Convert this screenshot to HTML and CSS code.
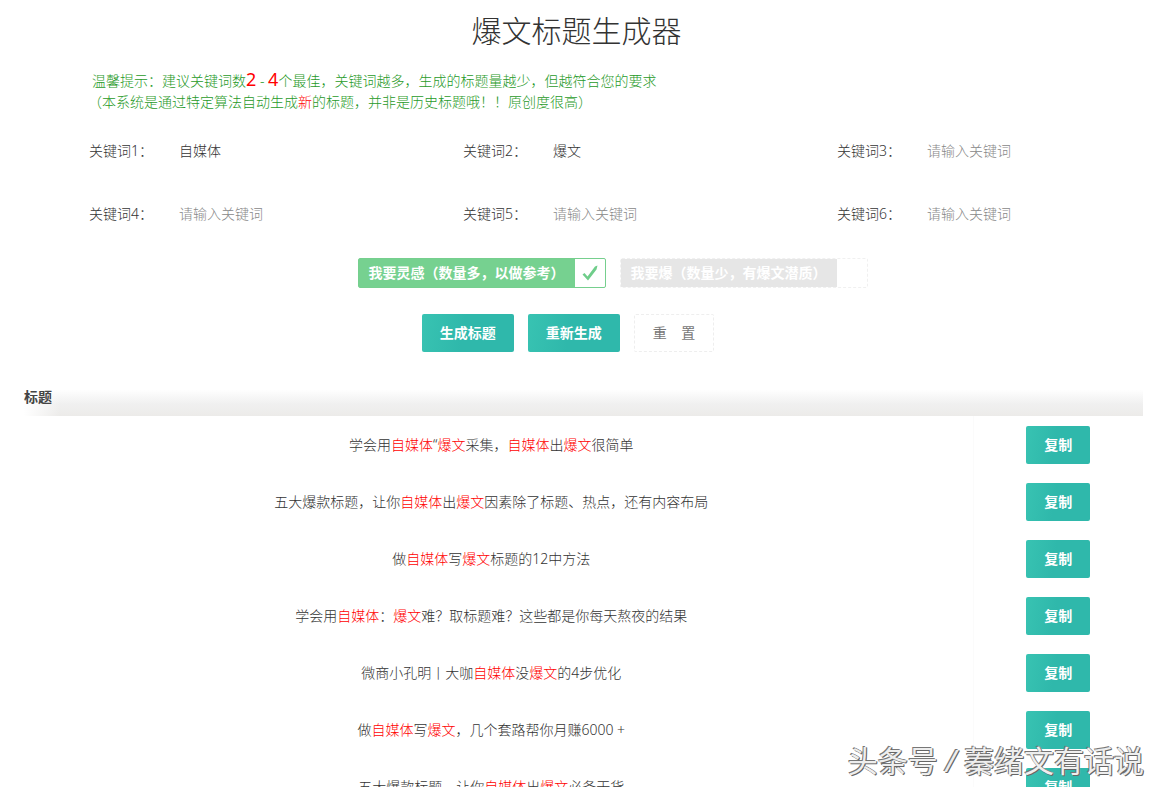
FILE: index.html
```html
<!DOCTYPE html>
<html lang="zh-CN">
<head>
<meta charset="utf-8">
<title>爆文标题生成器</title>
<link rel="stylesheet" href="styles.css">
</head>
<body>
<main class="page">
  <h1 class="title">爆文标题生成器</h1>
  <div class="tips">
    <p class="tip tip-first">温馨提示：建议关键词数<b class="num">2</b> - <b class="num">4</b>个最佳，关键词越多，生成的标题量越少，但越符合您的要求</p>
    <p class="tip">（本系统是通过特定算法自动生成<em>新</em>的标题，并非是历史标题哦！！原创度很高）</p>
  </div>
  <form class="form">
    <div class="fields">
      <div class="field"><label for="k1">关键词1：</label><input id="k1" type="text" value="自媒体" placeholder="请输入关键词"></div>
      <div class="field"><label for="k2">关键词2：</label><input id="k2" type="text" value="爆文" placeholder="请输入关键词"></div>
      <div class="field"><label for="k3">关键词3：</label><input id="k3" type="text" placeholder="请输入关键词"></div>
      <div class="field"><label for="k4">关键词4：</label><input id="k4" type="text" placeholder="请输入关键词"></div>
      <div class="field"><label for="k5">关键词5：</label><input id="k5" type="text" placeholder="请输入关键词"></div>
      <div class="field"><label for="k6">关键词6：</label><input id="k6" type="text" placeholder="请输入关键词"></div>
    </div>
    <div class="modes">
      <label class="mode mode-on"><input type="checkbox" checked><span class="mode-text">我要灵感（数量多，以做参考）</span><span class="mode-box"><svg width="16" height="16" viewBox="0 0 16 16"><path d="M0.5 9.5 L2.5 8 L5.5 11.5 L13 1.5 L15.5 0.5 L14.5 4.5 L6 15.5 Z" fill="#6fcd8a"/></svg></span></label>
      <label class="mode"><input type="checkbox"><span class="mode-text">我要爆（数量少，有爆文潜质）</span><span class="mode-box"></span></label>
    </div>
    <div class="actions">
      <button class="btn" type="button">生成标题</button>
      <button class="btn" type="button">重新生成</button>
      <button class="btn btn-plain" type="reset">重&nbsp;&nbsp;&nbsp;&nbsp;置</button>
    </div>
  </form>
  <table class="results">
    <thead><tr><th class="col-title" scope="col">标题</th><th class="col-copy"></th></tr></thead>
    <tbody>
      <tr><td>学会用<em>自媒体</em>“<em>爆文</em>采集，<em>自媒体</em>出<em>爆文</em>很简单</td><td><button class="btn" type="button">复制</button></td></tr>
      <tr><td>五大爆款标题，让你<em>自媒体</em>出<em>爆文</em>因素除了标题、热点，还有内容布局</td><td><button class="btn" type="button">复制</button></td></tr>
      <tr><td>做<em>自媒体</em>写<em>爆文</em>标题的12中方法</td><td><button class="btn" type="button">复制</button></td></tr>
      <tr><td>学会用<em>自媒体</em>：<em>爆文</em>难？取标题难？这些都是你每天熬夜的结果</td><td><button class="btn" type="button">复制</button></td></tr>
      <tr><td>微商小孔明丨大咖<em>自媒体</em>没<em>爆文</em>的4步优化</td><td><button class="btn" type="button">复制</button></td></tr>
      <tr><td>做<em>自媒体</em>写<em>爆文</em>，几个套路帮你月赚6000 +</td><td><button class="btn" type="button">复制</button></td></tr>
      <tr><td>五大爆款标题，让你<em>自媒体</em>出<em>爆文</em>必备干货</td><td><button class="btn" type="button">复制</button></td></tr>
    </tbody>
  </table>
  <div class="watermark">头条号 <i>/</i> 蓁绪文有话说</div>
</main>
</body>
</html>
```
FILE: styles.css
```css
* { box-sizing: border-box; }
body {
  margin: 0;
  background: #fff;
  color: #333;
  font: 300 14px/22px "Noto Sans", "Noto Sans CJK SC", sans-serif;
  text-spacing-trim: space-all;
}
button, input { font: inherit; color: inherit; }
em { font-style: normal; color: #f00; }
.page {
  position: relative;
  height: 100vh;
  overflow: hidden;
  padding: 8px 19px 0 10px;
}
.title {
  margin: 0;
  text-align: center;
  font-size: 30px;
  font-weight: 300;
  line-height: 45px;
  color: #333;
}
.tips { padding: 16px 0 0 78px; color: #1f9a28; }
.tip { margin: 0; height: 22px; }
.tip-first { padding-left: 4px; line-height: 20px; }
.num { font-size: 18px; font-weight: 400; color: #f00; }
.fields {
  display: grid;
  grid-template-columns: repeat(3, 1fr);
  row-gap: 25px;
  padding: 19px 6px 0 5px;
}
.field { display: flex; align-items: center; padding-left: 74px; height: 38px; }
.field label { width: 80px; white-space: nowrap; }
.field input {
  flex: 1;
  min-width: 0;
  height: 38px;
  border: 0;
  padding: 0 10px 2px;
  background: none;
  outline: none;
}
.field input::placeholder { color: #888; opacity: 1; }
.modes {
  display: flex;
  justify-content: center;
  gap: 14px;
  padding: 25px 0 0 72px;
}
.mode {
  display: flex;
  height: 30px;
  border: 1px dashed #f0f0f0;
  border-radius: 2px;
  line-height: 28px;
  color: #fff;
  font-weight: 700;
}
.mode input { position: absolute; opacity: 0; }
.mode-text { padding: 0 10px; background: #e6e6e6; white-space: nowrap; }
.mode-box { display: flex; align-items: center; justify-content: center; width: 30px; }
.mode-on { border: 1px solid #76cf8e; }
.mode-on .mode-text { background: #76d190; }
.actions { display: flex; justify-content: center; gap: 14px; padding: 26px 17px 0 0; }
.btn {
  height: 38px;
  padding: 0 18px;
  border: 0;
  border-radius: 2px;
  background: linear-gradient(100deg, #38c3b2, #2fb8ab 45%);
  color: #fff;
  font-weight: 700;
  white-space: nowrap;
}
.btn-plain { border: 1px dashed #eee; background: #fff; color: #777; font-weight: 400; }
.results {
  width: 100%;
  margin-top: 26px;
  border-collapse: collapse;
  table-layout: fixed;
}
.results thead {
  background:
    linear-gradient(90deg, #fff 14px, transparent 50px),
    linear-gradient(#fff 30%, #f0f0f0 68%, #ecebe9);
}
.results th { height: 38px; padding: 0 14px; text-align: left; color: #444; font-weight: 700; }
.col-copy { width: 170px; }
.results td { height: 57px; padding: 0; text-align: center; vertical-align: middle; }
.results td + td { border-left: 1px solid #fbfbfb; }
.results .btn { vertical-align: middle; }
.watermark {
  position: absolute;
  right: 18px;
  bottom: 4px;
  font-size: 30px;
  line-height: 44px;
  font-weight: 400;
  color: #eee;
  white-space: nowrap;
  text-shadow: 1px 1px 0 #666, -1px -1px 0 #777, 1px 0 0 #888;
}
```
